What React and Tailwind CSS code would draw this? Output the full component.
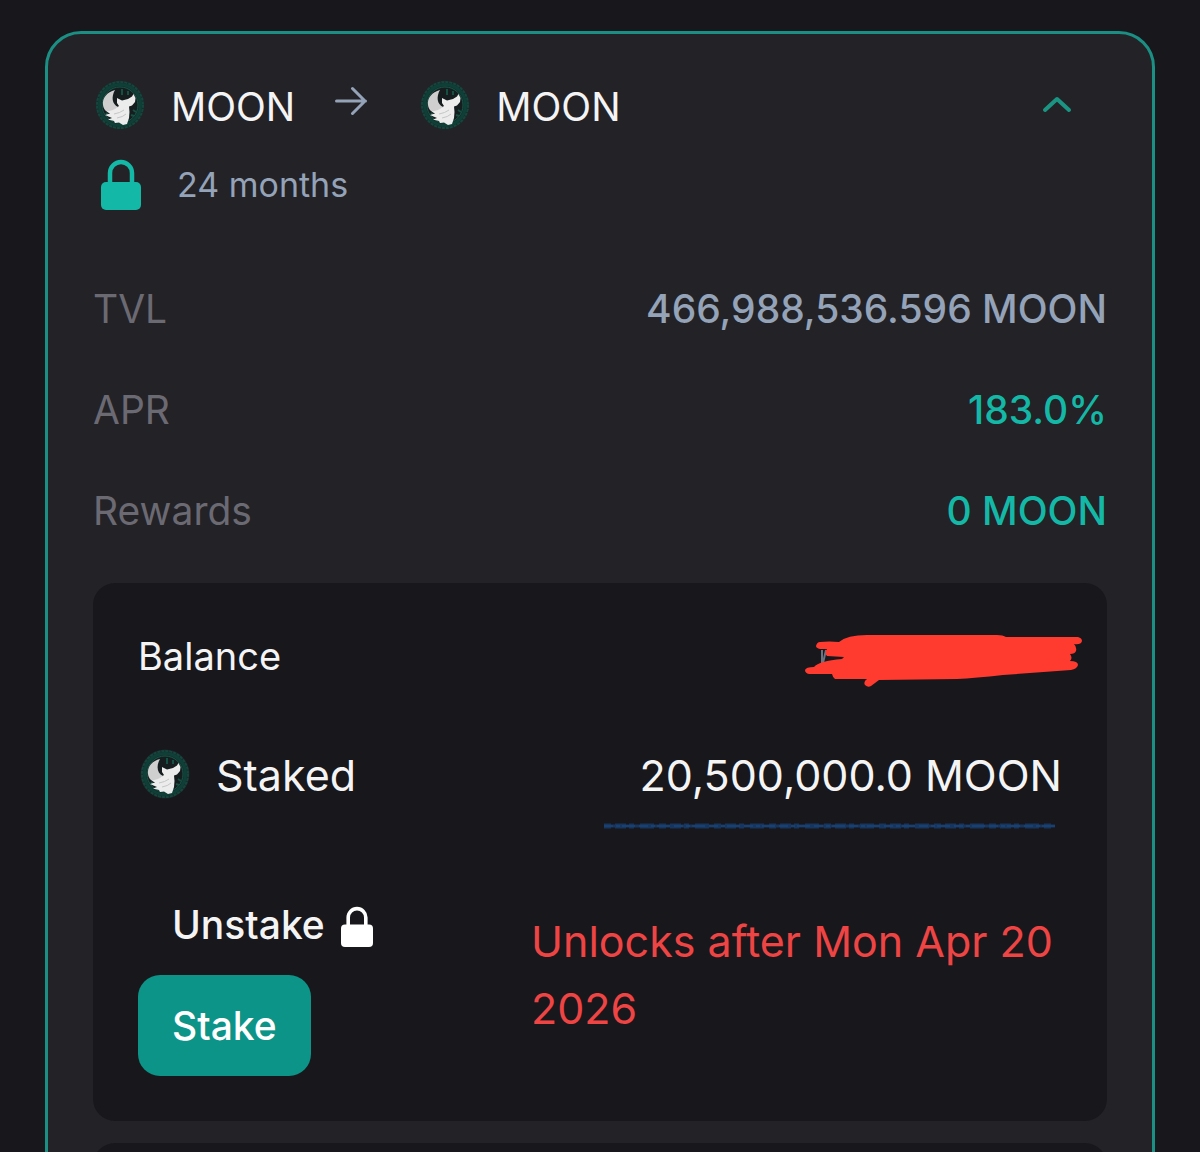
import React, { useState } from "react";

const MoonLogo = () => (
  <svg viewBox="0 0 50 50" className="w-[50px] h-[50px] mb-[4px] shrink-0" aria-hidden="true">
    <circle cx="25" cy="25" r="24.5" fill="#1b2a2b" />
    <circle cx="25" cy="25" r="23" fill="none" stroke="#14463e" strokeWidth="2" strokeDasharray="3 1" />
    <circle cx="25" cy="25" r="20.5" fill="none" stroke="#0e4038" strokeWidth="3" />
    <circle cx="25" cy="25" r="18" fill="#151d1e" stroke="#14584a" strokeWidth="1" />
    <path d="M27 9v6M33 11v4M38 30l3 2M36 35l3 1M11 33l3 3" stroke="#155044" strokeWidth="2" />
    <path d="M20 10C12 12 7 18 8 25C8.500 29 11 32 15 33L23 27C17 24 16 17 20 10Z" fill="#cfcfcf" />
    <path
      d="M22 18L27 20.500L33 19L37 16.500L38.500 14L40.500 18L40 22L37 25.500L34 26.500L34.500 32L34 38L32 44L28 45L24 42.500L20 43L19 41L13 39.500L17 38L10 35L15 33.500L12 31.500L18 30L24 26L22 23Z"
      fill="#ececec"
    />
    <path d="M19 34Q25 33 29 30M22 38Q28 37 31 34" stroke="#c4c6c6" strokeWidth="1" fill="none" />
  </svg>
);

const Lock = ({ className }) => (
  <svg viewBox="0 0 40 52" className={className} fill="none" aria-hidden="true">
    <path d="M9 25V14a11 11 0 0 1 22 0v11" stroke="currentColor" strokeWidth="4.5" />
    <rect x="0" y="23" width="40" height="28" rx="5" fill="currentColor" />
  </svg>
);

const ArrowRight = () => (
  <svg viewBox="0 0 32 28" className="w-[32px] h-[48px] text-[#94a3b8]" fill="none" aria-hidden="true">
    <path
      d="M1.5 14h29M17.5 1.5L30 14 17.5 26.5"
      stroke="currentColor"
      strokeWidth="3"
      strokeLinecap="round"
      strokeLinejoin="round"
    />
  </svg>
);

const Scribble = () => (
  <svg viewBox="0 0 278 54" className="w-[278px] h-[54px]" aria-hidden="true">
    <path d="M17 16v14M21 16l-3 13" stroke="#6b7280" strokeWidth="2" />
    <path
      d="M15 8Q24 7 34 8Q42 1 62 1H192Q198 1 201 3H273Q277 4 277 7Q276 11 269 10Q272 13 271 17Q270 20 265 20Q268 24 265 27Q273 27 273 31Q272 35 266 36L198 41Q170 44 152 45L74 46L66 52Q63 54 60 51Q58 48 62 45H30Q28 44 27 40H4Q0 39 0 36Q1 33 9 33Q14 27 37 25L39 23L22 22Q19 19 22 15H15Q11 14 11 12Q12 8 15 8Z"
      fill="#ff3b30"
    />
  </svg>
);

const Underline = () => (
  <svg viewBox="0 0 453 8" className="w-[453px] h-[8px]" fill="none" aria-hidden="true">
    <path d="M1 4h451" stroke="#16365f" strokeWidth="3" />
    <path d="M1 4h451" stroke="#16365f" strokeWidth="5" strokeDasharray="7 4 11 3 5 6 14 5" />
    <path d="M1 4h451" stroke="#1e4a80" strokeWidth="1" strokeDasharray="9 3 4 2 13 4" />
  </svg>
);

const stats = [
  { label: "TVL", value: "466,988,536.596 MOON", color: "text-[#94a3b8]" },
  { label: "APR", value: "183.0%", color: "text-[#14b8a6]" },
  { label: "Rewards", value: "0 MOON", color: "text-[#14b8a6]" },
];

const App = () => {
  const [open, setOpen] = useState(true);

  return (
    <div className="h-screen overflow-hidden bg-[#18171c] px-[45px] pt-[31px] font-['Inter',sans-serif] text-[#f4f4f5]">
      <div className="rounded-[36px] border-[3px] border-[#1b8f83] bg-[#232227] px-[45px] pt-[43px] pb-[45px]">
        <div className="flex items-center text-[39px] leading-[60px]">
          <div className="flex items-center gap-[26px] pl-[2px]">
            <MoonLogo />
            <span>MOON</span>
          </div>
          <div className="self-start ml-[40px] mr-[53px]">
            <ArrowRight />
          </div>
          <div className="flex items-center gap-[26px]">
            <MoonLogo />
            <span>MOON</span>
          </div>
          <button
            type="button"
            aria-label="Toggle details"
            aria-expanded={open}
            onClick={() => setOpen(!open)}
            className="ml-auto mr-[35px] pb-[4px] text-[#1b9583]"
          >
            <svg viewBox="0 0 30 20" className="w-[30px] h-[20px]" fill="none" aria-hidden="true">
              <path d="M3 15L15 4l12 11" stroke="currentColor" strokeWidth="4" strokeLinecap="round" strokeLinejoin="round" />
            </svg>
          </button>
        </div>

        <div className="flex items-center gap-[36px] pl-[8px] mt-[22px]">
          <Lock className="w-[40px] h-[52px] text-[#14b8a6]" />
          <span className="text-[34px] leading-[52px] text-[#94a3b8]">24 months</span>
        </div>

        <dl className="mt-[67px] flex flex-col gap-[40px] text-[39px] leading-[61px]">
          {stats.map((stat) => (
            <div key={stat.label} className="flex justify-between">
              <dt className="text-[#6b6a73]">{stat.label}</dt>
              <dd className={`font-medium ${stat.color}`}>{stat.value}</dd>
            </div>
          ))}
        </dl>

        {open && (
          <div className="mt-[42px] rounded-[22px] bg-[#18171c] px-[45px] pt-[43px] pb-[45px]">
            <div className="flex items-center justify-between">
              <span className="text-[38px] leading-[61px]">Balance</span>
              <div className="-mr-[21px] h-[46px]">
                <Scribble />
              </div>
            </div>

            <div className="flex items-center justify-between mt-[55px] text-[43px] leading-[67px]">
              <div className="flex items-center gap-[26px] pl-[2px]">
                <MoonLogo />
                <span>Staked</span>
              </div>
              <span>20,500,000.0 MOON</span>
            </div>
            <div className="flex justify-end mt-[13px] pr-[6px]">
              <Underline />
            </div>

            <div className="flex items-center gap-[8px] mt-[44px]">
              <div className="w-5/12 shrink-0 flex flex-col items-start text-[39px] leading-[61px] font-medium">
                <button type="button" className="flex items-center gap-[16px] px-[34px] py-[20px]">
                  Unstake
                  <Lock className="w-[32px] h-[42px] mt-[4px] text-white" />
                </button>
                <button type="button" className="rounded-[22px] bg-[#0d9488] px-[34px] py-[20px] text-white">
                  Stake
                </button>
              </div>
              <p className="text-[43px] leading-[67px] text-[#ef4444]">Unlocks after Mon Apr 20 2026</p>
            </div>
          </div>
        )}

        <div className="mt-[22px] h-[200px] rounded-[22px] bg-[#18171c]" />
      </div>
    </div>
  );
};

export default App;
